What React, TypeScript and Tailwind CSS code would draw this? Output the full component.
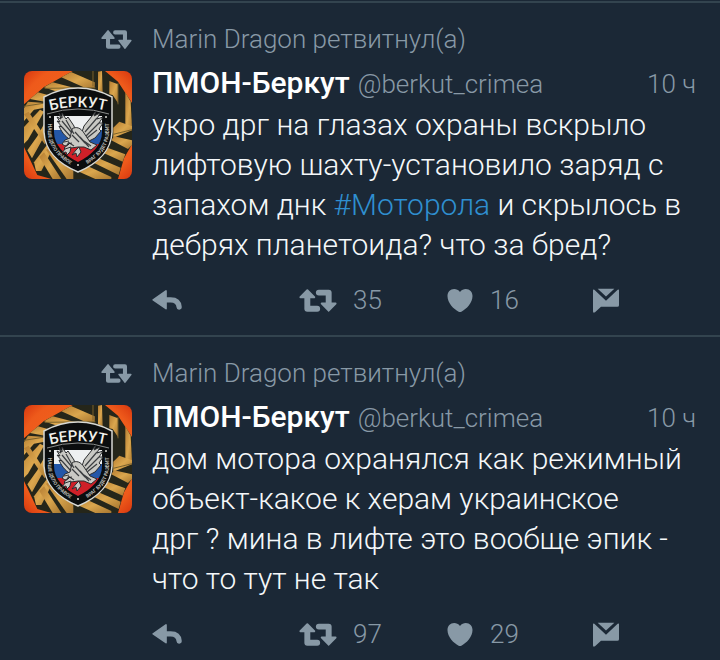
import React from 'react';

interface Tweet {
  id: number;
  retweetedBy: string;
  name: string;
  handle: string;
  time: string;
  body: React.ReactNode;
  retweets: number;
  likes: number;
}

const tweets: Tweet[] = [
  {
    id: 1,
    retweetedBy: 'Marin Dragon',
    name: 'ПМОН-Беркут',
    handle: '@berkut_crimea',
    time: '10 ч',
    body: (
      <>
        укро дрг на глазах охраны вскрыло лифтовую шахту-установило заряд с запахом днк{' '}
        <a href="#motorola" className="text-[#2f8fd0]">#Моторола</a> и скрылось в дебрях планетоида? что за бред?
      </>
    ),
    retweets: 35,
    likes: 16,
  },
  {
    id: 2,
    retweetedBy: 'Marin Dragon',
    name: 'ПМОН-Беркут',
    handle: '@berkut_crimea',
    time: '10 ч',
    body: 'дом мотора охранялся как режимный объект-какое к херам украинское дрг\u00a0? мина в лифте это вообще эпик - что то тут не так',
    retweets: 97,
    likes: 29,
  },
];

const RetweetedIcon: React.FC = () => (
  <svg viewBox="0 0 90 56" className="w-[31px] h-[19px]" fill="currentColor" stroke="currentColor" strokeLinejoin="round" aria-hidden="true">
    <path d="M20 3 37 24H3Z" strokeWidth="5" />
    <path d="M20 20V49H51" fill="none" strokeWidth="12" strokeLinecap="round" />
    <path d="M70 53 53 31H87Z" strokeWidth="5" />
    <path d="M70 36V7H41" fill="none" strokeWidth="12" strokeLinecap="round" />
  </svg>
);

const RetweetIcon: React.FC = () => (
  <svg viewBox="0 0 115 70" className="w-[38px] h-[23px]" fill="currentColor" stroke="currentColor" strokeLinejoin="round" aria-hidden="true">
    <path d="M25 4 46 25H4Z" strokeWidth="6" />
    <path d="M25 22V60H55" fill="none" strokeWidth="18" strokeLinecap="round" />
    <path d="M90 66 69 44H111Z" strokeWidth="6" />
    <path d="M90 46V11H60" fill="none" strokeWidth="18" strokeLinecap="round" />
  </svg>
);

const ReplyIcon: React.FC = () => (
  <svg viewBox="0 0 90 61" className="w-[30px] h-[20px]" fill="currentColor" stroke="currentColor" strokeLinejoin="round" aria-hidden="true">
    <path d="M3 30 42 3V57Z" strokeWidth="5" />
    <path d="M40 30H56C72 30 81 38 82 52" fill="none" strokeWidth="16" strokeLinecap="round" />
  </svg>
);

const HeartIcon: React.FC = () => (
  <svg viewBox="-4 0 82 68" className="w-[28px] h-[23px]" fill="currentColor" aria-hidden="true">
    <path d="M37 9C42 2 48 0 54 0C66 0 74 9 74 21C74 41 56 60 41 67Q37 69 33 67C18 60 0 41 0 21C0 9 8 0 20 0C26 0 32 2 37 9Z" />
  </svg>
);

const MessageIcon: React.FC = () => (
  <svg viewBox="0 0 78 74" className="w-[26px] h-[25px]" fill="currentColor" aria-hidden="true">
    <path d="M14 2H64L39 25Z" />
    <path d="M0 6Q0 2 4 5L39 38L74 5Q78 2 78 6V51Q78 56 73 56H24L6 72Q0 76 0 69Z" />
  </svg>
);

// Striped ribbons folded round the badge, on a 324-unit square
const Ribbons: React.FC<{ id: number }> = ({ id }) => (
  <g transform="scale(0.3333)">
    <path d="M0 100 60 48 146 0H243L282 32 324 96V220L300 262 282 324H82L40 312 0 228Z" fill="#25261a" />
    <g fill={`url(#gold-${id})`}>
      <path d="M112 19 141 3 212 34V52L186 52Z" />
      <path d="M60 49 86 34 166 55 110 66Z" />
      <path d="M18 84 42 64 100 80 62 92Z" />
      <path d="M0 112 12 92 62 96V110L30 116 0 150Z" />
      <path d="M0 168 48 116 60 122 12 206 0 218Z" />
      <path d="M40 196 64 152V190L24 262 10 238Z" />
      <path d="M0 130 14 122 70 208 62 220Z" />
      <path d="M30 274 76 212 90 226 52 300 36 300Z" />
      <path d="M66 236 84 228 148 300V324H128Z" />
      <path d="M46 258 60 244 112 324H86Z" />
      <path d="M222 2 234 0 236 64 222 58Z" />
      <path d="M256 30 282 40V96L266 72 256 70Z" />
      <path d="M304 64 320 92 324 168 304 186Z" />
      <path d="M268 170 286 152 324 166V178L268 200Z" />
      <path d="M262 208 270 196 324 208V222L312 234Z" />
      <path d="M226 240 244 228 304 250 296 272Z" />
      <path d="M186 264 206 254 290 290 284 312Z" />
      <path d="M152 296 176 278 262 318V324H214Z" />
    </g>
    <path d="M207 0V46M0 106 64 96M62 52 214 50M282 36V100M268 190 324 176" fill="none" stroke="#77602c" strokeWidth="3" />
  </g>
);

const Avatar: React.FC<{ id: number }> = ({ id }) => (
  <svg viewBox="0 0 108 108" className="w-[108px] h-[108px] rounded-lg" role="img" aria-label="Беркут">
    <defs>
      <radialGradient id={`fire-${id}`} cx="50%" cy="50%" r="70%">
        <stop offset="0.5" stopColor="#f0601c" />
        <stop offset="0.8" stopColor="#ee5a1b" />
        <stop offset="1" stopColor="#d8380f" />
      </radialGradient>
      <linearGradient id={`gold-${id}`} x1="0" y1="0" x2="1" y2="1">
        <stop offset="0" stopColor="#b57d32" />
        <stop offset="0.5" stopColor="#dba74e" />
        <stop offset="1" stopColor="#a87730" />
      </linearGradient>
      <clipPath id={`field-${id}`}>
        <path d="M30 45H78V61C78 74 68 84 54 91C40 84 30 74 30 61Z" />
      </clipPath>
      <path id={`title-${id}`} d="M21 41Q54 31 87 41" />
      <path id={`left-${id}`} d="M24 50V62C25 76 33 86 49 95" />
      <path id={`right-${id}`} d="M60 95C76 86 84 76 85 62V49" />
    </defs>
    <rect width="108" height="108" fill={`url(#fire-${id})`} />
    <Ribbons id={id} />
    <path d="M54 17C42 17 31 20 20 26V61C21 80 33 92 54 101C75 92 87 80 88 61V26C77 20 66 17 54 17Z" fill="#0b0d0e" stroke="#d8d9d4" strokeWidth="1.5" />
    <path d="M23 43Q54 33 85 43" fill="none" stroke="#8b8d8c" strokeWidth="1" />
    <text fontFamily="Roboto, sans-serif" fontSize="15" fontWeight="500" fill="#f1f1ec">
      <textPath href={`#title-${id}`} startOffset="50%" textAnchor="middle">БЕРКУТ</textPath>
    </text>
    <g clipPath={`url(#field-${id})`}>
      <rect x="30" y="45" width="48" height="16" fill="#eef0f1" />
      <rect x="30" y="59" width="48" height="14" fill="#2457a8" />
      <rect x="30" y="73" width="48" height="22" fill="#cf2028" />
    </g>
    <text fontFamily="Roboto, sans-serif" fontSize="5" fontWeight="700" fill="#b9bab5">
      <textPath href={`#left-${id}`} startOffset="50%" textAnchor="middle">НАШЕ ДЕЛО ПРАВОЕ</textPath>
    </text>
    <text fontFamily="Roboto, sans-serif" fontSize="5" fontWeight="700" fill="#b9bab5">
      <textPath href={`#right-${id}`} startOffset="50%" textAnchor="middle">ВРАГ БУДЕТ РАЗБИТ</textPath>
    </text>
    <circle cx="26" cy="46" r="1" fill="#d8d8d2" />
    <circle cx="82" cy="46" r="1" fill="#d8d8d2" />
    <circle cx="54" cy="94" r="1" fill="#d8d8d2" />
    {/* eagle */}
    <g fill="#c9c9c4" stroke="#2b2d2f" strokeWidth="1" strokeLinejoin="round">
      <path d="M35 42L38 47L38 42L42 48L44 46L50 55L52 64L47 69C41 66 37 60 35 55L38 56L33 50L36 51L33 46L37 48Z" />
      <path d="M72 40L70 45L76 42L73 48L79 46L75 52L79 52L75 58L77 60L71 67L63 71L57 64L60 55Z" />
      <path d="M48 58C52 55 57 57 60 62L66 71L73 74L67 79L60 76L54 76L47 77L43 80L40 77L45 73L41 75L38 73L41 69L46 67Z" />
      <path d="M47 76L46 81L43 84L42 81L38 82L41 78ZM55 76L57 81L53 86L52 82L48 84L52 79Z" />
    </g>
    <path d="M38 50L48 62M42 49L50 63M38 56L47 66M73 47L61 61M75 52L62 65M73 59L63 67M48 64L55 71M51 61L61 72M56 66L65 76M44 71L50 75M60 70L67 75" stroke="#3b3e41" strokeWidth="1.2" />
    <path d="M40 71L45 70M43 73L48 72" stroke="#1a1b1c" strokeWidth="0.8" />
  </svg>
);

const TweetItem: React.FC<{ tweet: Tweet }> = ({ tweet }) => (
  <article className="grid grid-cols-[108px_1fr] gap-x-5 border-t-2 border-[#33444f] px-6 pt-4 pb-[15px]">
    <div className="flex h-10 items-center justify-end text-[#8899a6]">
      <RetweetedIcon />
    </div>
    <div className="flex h-10 items-center text-[26px] font-light text-[#8899a6]">{tweet.retweetedBy} ретвитнул(а)</div>

    <div className="pt-3">
      <Avatar id={tweet.id} />
    </div>
    <div className="min-w-0 pt-1">
      <header className="mb-0.5 flex h-10 items-baseline text-[26px] leading-10 font-light text-[#8899a6]">
        <a href="#profile" className="text-[30px] font-medium text-white">{tweet.name}</a>
        <span className="ml-2">{tweet.handle}</span>
        <time className="ml-auto">{tweet.time}</time>
      </header>
      <p className="pr-2 text-[30px] leading-10 font-light text-[#f5f8fa]">{tweet.body}</p>
      <div className="mt-[15px] mr-[77px] grid h-10 grid-cols-[1fr_1fr_1fr_auto] items-center text-[26px] font-light text-[#8899a6]">
        <button type="button" aria-label="Ответить" className="flex items-center">
          <ReplyIcon />
        </button>
        <button type="button" aria-label="Ретвитнуть" className="flex items-center gap-4">
          <RetweetIcon />
          {tweet.retweets}
        </button>
        <button type="button" aria-label="Нравится" className="flex items-center gap-4">
          <HeartIcon />
          {tweet.likes}
        </button>
        <button type="button" aria-label="Личное сообщение" className="flex items-center">
          <MessageIcon />
        </button>
      </div>
    </div>
  </article>
);

const App: React.FC = () => (
  <main className="min-h-screen bg-[#1b2836] pt-px font-['Roboto',sans-serif]">
    {tweets.map((tweet) => (
      <TweetItem key={tweet.id} tweet={tweet} />
    ))}
  </main>
);

export default App;
